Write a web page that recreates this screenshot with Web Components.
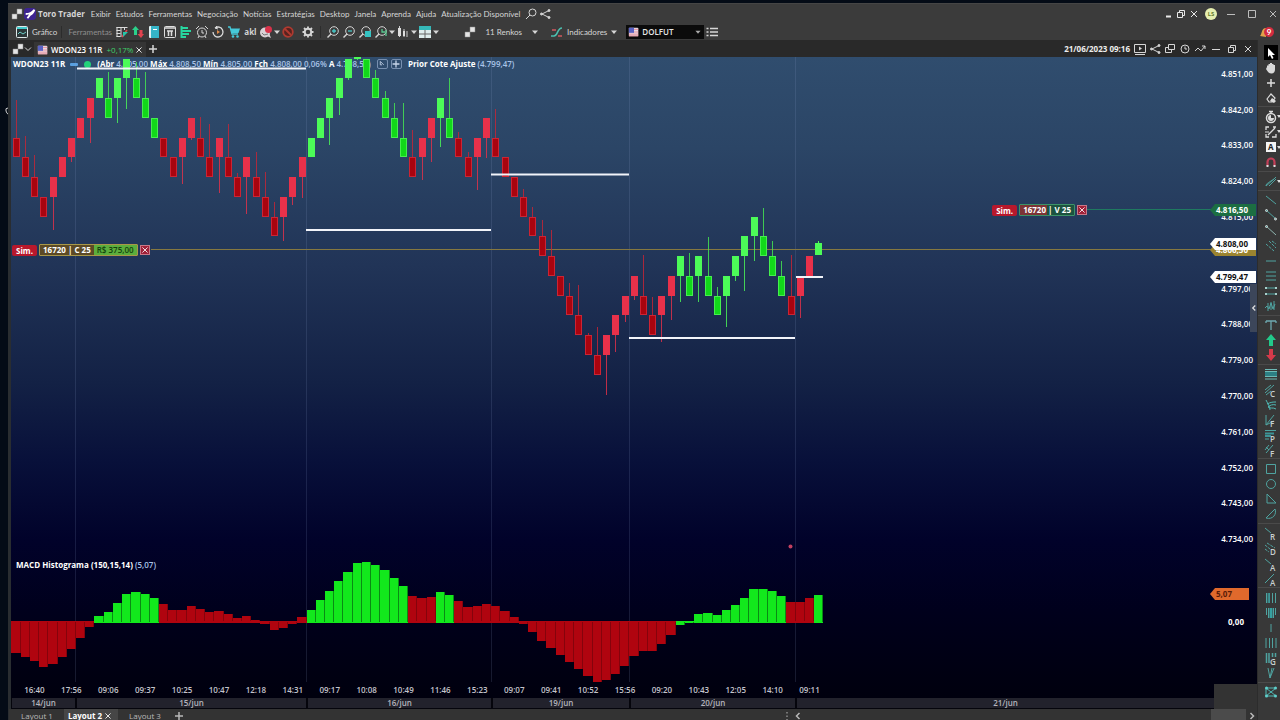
<!DOCTYPE html>
<html lang="pt-BR">
<head>
<meta charset="utf-8">
<title>Toro Trader</title>
<style>
html,body{margin:0;height:100%;background:#040b16;overflow:hidden}
body{font:8px/12px "Open Sans","Noto Sans",sans-serif;color:#d6d6d6}
</style>
</head>
<body>
<tt-app></tt-app>
<script>
const BASE = `*{box-sizing:border-box}
button,select{font:inherit;color:inherit;background:none;border:0;padding:0;margin:0;border-radius:0}
button{display:flex;align-items:center;justify-content:center;white-space:nowrap}
svg{display:block}`;

function define(name, css, html, setup) {
  const tpl = document.createElement('template');
  tpl.innerHTML = `<style>${BASE}${css}</style>${html}`;
  customElements.define(name, class extends HTMLElement {
    connectedCallback() {
      if (this.shadowRoot) return;
      this.attachShadow({mode: 'open'}).append(tpl.content.cloneNode(true));
      if (setup) setup(this, this.shadowRoot);
    }
  });
}

/* ---------- icons, drawn on a 14 x 14 grid ---------- */
const T = '#4fa3a0';
const letter = c => `<text x="6" y="14" font-size="8" font-weight="600" fill="#c8d0d0" stroke="none" font-family="Open Sans,sans-serif">${c}</text>`;
const flag = `<rect x="1" y="2" width="11" height="10" rx="1" fill="#e9d9e2" stroke="none"/><path d="M6 4h6M6 7h6M1 9.500h11M1 11.500h11" stroke="#e58a96"/><rect x="1" y="2" width="6" height="6" fill="#5a62c4" stroke="none"/>`;
const ICONS = {
  squares: `<path d="M2 7h5v5h-5zM7 2h5v5h-5z" fill="#e4e4e4" stroke="#8a8a8a" stroke-width=".5"/>`,
  logo: `<rect x="0" y="0" width="14" height="14" rx="4" fill="#3c2490" stroke="none"/><path d="M2 7c3 0 7-1 10-5-1 4-3 5-5 6l-3 4" stroke="#fff" stroke-width="2.200"/>`,
  search: `<circle cx="8.500" cy="5.500" r="3.500"/><path d="M6 8l-4 4"/>`,
  share: `<path d="M11 3.500L4 7l7 3.500"/><g fill="currentColor"><circle cx="11" cy="3.500" r="1"/><circle cx="3.500" cy="7" r="1"/><circle cx="11" cy="10.500" r="1"/></g>`,
  min: `<path d="M3 7.500h8"/>`,
  minb: `<path d="M5 9.500h5" stroke-width="2"/>`,
  max: `<path d="M3.500 3.500h7v7h-7z"/>`,
  restore: `<path d="M3.500 5.500h5v5h-5zM5.500 5.500v-2h5v5h-2"/>`,
  close: `<path d="M4 4l6 6M10 4l-6 6"/>`,
  plus: `<path d="M7 3v8M3 7h8" stroke-width="1.500"/>`,
  bell: `<path d="M0 11c2-1 1-8 6-8v9z" fill="#e0a24a" stroke="none"/>`,
  grafico: `<rect x="1.500" y="1.500" width="11" height="11" rx="1" fill="#2b3638" stroke="#dfe9e9"/><path d="M2 3h10" stroke="#4cc" stroke-width="2"/><path d="M3 9l2-2 3 2 3-2" stroke="#6fd0c8"/>`,
  table: `<path d="M1.500 2.500h11M1.500 5.500h4M1.500 8.500h4M1.500 11.500h4M2 2v10M6 2v10M9.500 2v3" stroke="#dcdcdc"/><path d="M12 5L7 12" stroke="#e0434f" stroke-width="1.500"/><path d="M8 7h5l-5 5z" fill="#27c4a8" stroke="none"/>`,
  updown: `<path d="M4.500 1L8 5H6v5H3V5H1z" fill="#2bd08a" stroke="none"/><path d="M10 13L6.500 9H8.500V5h3v4H13z" fill="#e0434f" stroke="none"/>`,
  book: `<rect x="2" y="1" width="10" height="12" rx="1" fill="#dfeff2" stroke="none"/><rect x="4" y="1" width="8" height="12" fill="#35b4c8" stroke="none"/><path d="M6 4.500h4" stroke="#fff"/>`,
  calendar: `<rect x="1.500" y="1.500" width="11" height="11" rx="1" stroke="#ddd"/><path d="M1.500 3h11M4 6h6M5.500 6v5M8.500 6v5" stroke="#ddd" stroke-width="1.500"/>`,
  depth: `<path d="M2.500 1v12" stroke="#27d7a0" stroke-width="2"/><path d="M3 3h6M3 6h9M3 9h7M3 12h4" stroke="#27d7a0" stroke-width="1.800"/>`,
  alarm: `<circle cx="7" cy="7.500" r="4.500"/><path d="M7 5v3h2M1 4l3-3M13 4l-3-3M3 13l1-2M11 13l-1-2" />`,
  replay: `<path d="M4 3a5 5 0 1 1-2 4" stroke="#ddd" stroke-width="1.300"/><path d="M4 3l2-2M4 3l3 1" /><path d="M6 5l3 2-3 2z" fill="#e08a4a" stroke="none"/>`,
  cart: `<path d="M1 2h2l2 7h6" stroke="#45c8d8" stroke-width="1.300"/><path d="M3.500 3.500H13L11.500 8H5z" fill="#45c8d8" stroke="none"/><circle cx="6" cy="11.500" r="1.300" fill="#45c8d8" stroke="none"/><circle cx="10.500" cy="11.500" r="1.300" fill="#45c8d8" stroke="none"/>`,
  chat: `<circle cx="6" cy="7.500" r="5" fill="#d8d0d4" stroke="none"/><path d="M8 11l4 2-2-5z" fill="#d8d0d4" stroke="none"/><circle cx="9.500" cy="4.500" r="3.500" fill="#d8324a" stroke="none"/><path d="M3 8l2 2 4-1" stroke="#777"/>`,
  block: `<circle cx="7" cy="7" r="4.800" fill="#57221f" stroke="#b03a30" stroke-width="1.800"/><path d="M4 4l6 6" stroke="#b03a30" stroke-width="1.800"/>`,
  gear: `<circle cx="7" cy="7" r="3.300" stroke-width="2"/><path d="M7 1.500v2M7 10.500v2M1.500 7h2M10.500 7h2M3 3l1.500 1.500M9.500 9.500L11 11M11 3L9.500 4.500M4.500 9.500L3 11" stroke-width="1.800"/>`,
  zoomin: `<circle cx="8" cy="6" r="4.300"/><path d="M5 9l-3.500 3.500" stroke-width="1.500"/><path d="M8 4v4M6 6h4" stroke="#48c8c8" stroke-width="1.300"/>`,
  zoomout: `<circle cx="8" cy="6" r="4.300"/><path d="M5 9l-3.500 3.500" stroke-width="1.500"/><path d="M6 6h4" stroke="#48c8c8" stroke-width="1.300"/>`,
  zoombox: `<circle cx="8" cy="6" r="4.300"/><path d="M5 9l-3.500 3.500" stroke-width="1.500"/><rect x="7" y="6" width="6" height="6" fill="#35c4c4" stroke="none"/>`,
  zoomtime: `<circle cx="8" cy="6" r="4.300"/><path d="M5 9l-3.500 3.500" stroke-width="1.500"/><path d="M8 4v3h3M12 5v6" stroke="#58c890" stroke-width="1.300"/>`,
  candles: `<path d="M3.500 1v11M8 4v8M11 6v6" stroke="#ccc"/><path d="M2 3h3v8H2z" fill="#ddd" stroke="none"/><path d="M7 6h2v5H7z" fill="#ddd" stroke="none"/>`,
  grid: `<rect x="1" y="1" width="12" height="12" fill="#dfeeee" stroke="none"/><rect x="1" y="1" width="12" height="4" fill="#35b8b8" stroke="none"/><path d="M7 5v8M1 9h12" stroke="#666"/>`,
  indic: `<path d="M1 11h3c4 0 3-8 8-8" stroke="#4cc0b0" stroke-width="1.500"/><path d="M2 5h4M8 11h4" stroke="#d05a60" stroke-width="1.300"/>`,
  list: `<path d="M5 3.500h8M5 7h8M5 10.500h8M1.500 3.500h2M1.500 7h2M1.500 10.500h2" stroke-width="1.500"/>`,
  flag,
  play: `<path d="M1.500 2.500h11v8h-11z"/><path d="M6 4.500l3 2-3 2z" fill="currentColor" stroke="none"/><path d="M2 12.500h10"/>`,
  windows: `<path d="M5.500 2.500h6v5h-6zM5.500 5.500h-3v5h6v-3"/>`,
  clock: `<circle cx="7" cy="7" r="4"/><path d="M7 4.500V7h2"/>`,
  trend: `<path d="M2 9l3-3 3 3 4-5M9 4h3v3"/>`,
  pointer: `<path d="M4 2v9l2-2 2 4 1.500-1-1.500-3h3z" fill="#fff" stroke="none"/>`,
  hand: `<path d="M3 6V4.500h1.500V3H6V2h2v1h1.500v1H11v4.500c0 2-1 4-3.500 4S4 11 2 8z" fill="#d8d8d8" stroke="none"/>`,
  erase: `<path d="M3 8l4-5 4 4-3 4H5z" stroke-width="1.200"/><path d="M8 7l4 3-2 2-4-2z" fill="#ddd" stroke="none"/>`,
  timer: `<circle cx="7" cy="8" r="4.500" stroke-width="1.500"/><path d="M5 1.500h4M7 2v2" stroke-width="1.500"/><path d="M7 5v3h3a3 3 0 1 1-3-3z" fill="#ddd" stroke="none"/>`,
  edit: `<path d="M2 5V2h3M9 2h3M2 9v3h3M12 9v3H8M4 10l7-7" stroke-width="1.300"/><path d="M1 7h4"/>`,
  letterA: `<rect x="2" y="2" width="10" height="10" fill="#f4f4f4" stroke="none"/><text x="4" y="10" font-size="8" font-weight="700" fill="#222" stroke="none" font-family="Open Sans,sans-serif">A</text>`,
  magnet: `<path d="M3.500 11V7a3.500 3.500 0 0 1 7 0v4" stroke="#c23f58" stroke-width="2.200"/><path d="M2.500 11h2M9.500 11h2" stroke="#ddd" stroke-width="2"/>`,
  brush: `<path d="M2 12l8-7 2-2M2 12c0-3 4-4 8-7M5 12l7-7" stroke="${T}"/>`,
  l1: `<path d="M2 3l10 8" stroke="${T}"/>`,
  l2: `<path d="M2 2l10 9" stroke="${T}"/><circle cx="2.500" cy="2.500" r="1" fill="${T}"/><circle cx="11.500" cy="11" r="1" fill="${T}"/>`,
  l3: `<path d="M2 2l10 9" stroke="#8fb5b0"/><circle cx="2.500" cy="2.500" r="1" fill="${T}"/>`,
  l4: `<path d="M2 5l8 7M5 2l7 7M8 2l4 3" stroke="${T}" stroke-dasharray="3 1"/>`,
  hline: `<path d="M2 7h10" stroke="${T}"/>`,
  hlines: `<path d="M2 3h10M2 7h10M2 11h10" stroke="${T}"/>`,
  channel: `<path d="M2 4h10M2 10h10" stroke="${T}"/><path d="M1 4h2M11 4h2M1 10h2M11 10h2" stroke="#a8d0cc" stroke-width="2"/>`,
  wave: `<path d="M1 9l2-2 2 3 2-6 2 6 2-5M4 4v8M7 3v8M10 2v9" stroke="${T}"/>`,
  text: `<path d="M2 3h10M7 3v9M2 3v2M12 3v2" stroke="#6da8b0" stroke-width="1.300"/>`,
  up: `<path d="M7 1l5 6H9v6H5V7H2z" fill="#22c98a" stroke="none"/>`,
  down: `<path d="M7 13l5-6H9V1H5v6H2z" fill="#d53a4a" stroke="none"/>`,
  fib: `<rect x="1" y="4" width="12" height="6" fill="#2c7f84" stroke="none"/><path d="M1 2.500h12M1 4.500h12M1 9.500h12M1 12h12" stroke="#6dbab6"/>`,
  fc: `<path d="M1 10L10 2M2 12l5-4M1 7l6-5" stroke="${T}"/>${letter('C')}`,
  fan: `<path d="M2 2c2 4 4 7 4 10M3 6c4-2 6-2 9-2M4 9c2-2 5-3 8-2M12 11c-3-2-6 0-8-2" stroke="#4fb8b4"/>`,
  ff: `<path d="M2 2v10L10 2M2 12l8-4" stroke="${T}"/>${letter('F')}`,
  fp: `<path d="M1 2.500h11M1 11h4" stroke="${T}"/><path d="M1 5.500h9M1 8h6" stroke="#3c9496" stroke-width="2"/>${letter('P')}`,
  fs: `<path d="M1 7l4-5M2 10l7-8M2 4l3 3" stroke="${T}"/>${letter('F')}`,
  square: `<path d="M2.500 2.500h9v9h-9z" stroke="${T}"/>`,
  circle: `<circle cx="7" cy="7" r="4.500" stroke="${T}"/>`,
  tri: `<path d="M3 2v9h9z" stroke="${T}"/>`,
  arc: `<path d="M2 11L11 2c2 5-2 11-9 9z" stroke="${T}"/>`,
  lr: `<path d="M1 2l6 5" stroke="${T}"/>${letter('R')}`,
  ld: `<path d="M1 4l5 4M3 2l8 5M1 8l4 3" stroke="${T}" stroke-dasharray="3 1"/>${letter('D')}`,
  la: `<path d="M1 2l6 5" stroke="${T}"/>${letter('A')}`,
  la2: `<path d="M1 11l9-9" stroke="${T}"/>${letter('A')}`,
  v1: `<path d="M2.500 2v10M5.500 2v10M8.500 2v10M11.500 2v10" stroke="${T}"/><path d="M4.500 2v10" stroke="#37898b" stroke-width="2"/>`,
  v2: `<path d="M2.500 2v7M11.500 2v7M4.500 2v10M9.500 2v10" stroke="${T}"/><path d="M7 2v10" stroke="#37a0a0" stroke-width="3"/>`,
  v3: `<path d="M7 3v8" stroke="${T}"/>`,
  v4: `<path d="M2 2v10M5.500 2v10M8.500 2v10M12 2v10" stroke="${T}"/>`,
  v5: `<path d="M2.500 2v10M5 2v10M8.500 2v4M11.500 2v4" stroke="${T}" stroke-width="1.500"/>${letter('G')}`,
  v6: `<path d="M4 2l2 10L10 2M8 2L6 12" stroke="${T}"/>`,
  net: `<path d="M2 3l10 8M12 3L2 11M2 3h10M2 11h10M2 3v8" stroke="#4fb8b4"/><g fill="#5fd0cc" stroke="none"><circle cx="2.500" cy="3" r="1.500"/><circle cx="11.500" cy="3" r="1.500"/><circle cx="2.500" cy="11" r="1.500"/><circle cx="11.500" cy="11" r="1.500"/></g>`,
  caret: `<path d="M4 5.500h6L7 9z" fill="currentColor" stroke="none"/>`,
  chevron: `<path d="M4 5.500l3 3 3-3"/>`,
  cursor: `<path d="M5 4l4 4M5 4v4h2" />`,
  left: `<path d="M8.500 4L5.500 7l3 3" stroke-width="1.500"/>`,
  right: `<path d="M5.500 4l3 3-3 3" stroke-width="1.500"/>`,
  more: `<path d="M7 3v1.500M7 6.500V8M7 10v1.500"/>`,
};
customElements.define('tt-icon', class extends HTMLElement {
  connectedCallback() {
    if (this.shadowRoot) return;
    this.attachShadow({mode: 'open'}).innerHTML = `<style>:host{display:block;flex:none;width:14px;height:14px}
      :host([size="small"]){width:12px;height:12px}
      svg{display:block;width:100%;height:100%;overflow:visible}</style>
      <svg viewBox="0 0 14 14" fill="none" stroke="currentColor" aria-hidden="true">${ICONS[this.getAttribute('name')] || ''}</svg>`;
  }
});
const btn = (icon, label, cls = '') => `<button class="${cls}" aria-label="${label}"><tt-icon name="${icon}"></tt-icon></button>`;

/* ---------- menu bar ---------- */
define('tt-menubar', `
:host{display:flex;align-items:center;height:20px;padding-left:2px;background:#3b3b3b;border-top:1px solid #454545;font-family:Lato,"Open Sans",sans-serif}
nav{display:flex;gap:5px;margin-left:6px}
strong{font:700 8px "Open Sans",sans-serif;margin-left:2px}
.tools{display:flex;margin-left:4px}
.win{display:flex;margin-left:auto;align-items:center;color:#e8e8e8}
.win button{width:13px}
.win .big{width:21px;color:#bdbdbd}
.win .big:last-child{width:15px;margin-left:3px}
.win .avatar{width:12px;height:12px;border-radius:50%;background:#e6efb0;color:#5f7a2a;font-size:6px;font-weight:700;margin:0 3px 0 5px}
`, `<tt-icon name="squares"></tt-icon><tt-icon name="logo" size="small"></tt-icon><strong>Toro Trader</strong>
<nav>${['Exibir','Estudos','Ferramentas','Negociação','Notícias','Estratégias','Desktop','Janela','Aprenda','Ajuda','Atualização Disponível'].map(t => `<button>${t}</button>`).join('')}</nav>
<div class="tools">${btn('search','Buscar')}${btn('share','Compartilhar')}</div>
<div class="win">${btn('minb','Minimizar gráfico')}${btn('restore','Restaurar gráfico')}${btn('close','Fechar gráfico')}<button class="avatar">LS</button>${btn('min','Minimizar','big')}${btn('max','Maximizar','big')}${btn('close','Fechar','big')}</div>`);

/* ---------- toolbar ---------- */
define('tt-toolbar', `
:host{display:flex;align-items:center;height:17px;padding-left:7px;background:#3b3b3b;font-family:Lato,"Open Sans",sans-serif}
button{height:16px;flex:none}
.i{width:16px}
.c{width:6px;overflow:hidden}
.c tt-icon{margin:0 -4px}
.label{gap:3px}
.muted{width:46px;margin-left:2px;color:#8e8e8e}
hr{width:1px;height:12px;border:0;margin:0 4px;background:#2c2c2c}
.akl{width:16px;font:700 8px "Open Sans",sans-serif}
.gear{margin:0 0 0 4px}
.renko{margin-left:24px;gap:8px}
.renko tt-icon:last-child{margin-left:-2px}
.ind{margin-left:8px}
.ind tt-icon:last-child{margin-left:-3px}
.combo{display:flex;align-items:center;position:relative;width:78px;height:14px;margin-left:5px;background:#0b0b0b}
.combo tt-icon{position:absolute;left:2px;pointer-events:none}
.combo tt-icon:last-child{left:auto;right:0;color:#aaa}
select{appearance:none;width:100%;height:100%;padding-left:16px;font:600 8px "Open Sans",sans-serif;color:#e6e6e6}
.bell{margin-left:auto;position:relative;width:20px;justify-content:flex-start}
.bell span{position:absolute;left:4px;top:3px;width:10px;height:10px;border-radius:50%;background:#d32c40;color:#fff;font-size:8px;line-height:10px;font-weight:700}
`, `<button class="label"><tt-icon name="grafico"></tt-icon>Gráfico</button><hr>
<span class="muted">Ferramentas</span>
${btn('table','Grade de cotações','i')}${btn('updown','Negociar','i')}${btn('book','Livro','i')}${btn('calendar','Times e trades','i')}${btn('depth','Profundidade','i')}${btn('alarm','Alarmes','i')}${btn('replay','Replay','i')}${btn('cart','Loja','i')}<button class="akl">akl</button>${btn('chat','Chat','i')}${btn('caret','Mais chat','c')}${btn('block','Bloquear','i')}${btn('gear','Configurações','i gear')}<hr>
${btn('zoomin','Aumentar','i')}${btn('zoomout','Diminuir','i')}${btn('zoombox','Zoom na área','i')}${btn('zoomtime','Zoom no tempo','i')}${btn('caret','Opções de zoom','c')}${btn('candles','Tipo de gráfico','i')}${btn('caret','Opções de tipo','c')}${btn('grid','Painéis','i')}${btn('caret','Opções de painéis','c')}
<button class="renko label"><tt-icon name="squares"></tt-icon>11 Renkos<tt-icon name="caret"></tt-icon></button>
<button class="ind label"><tt-icon name="indic"></tt-icon>Indicadores<tt-icon name="caret"></tt-icon></button>
<div class="combo"><tt-icon name="flag" size="small"></tt-icon><select aria-label="Ativo"><option>DOLFUT</option></select><tt-icon name="caret" size="small"></tt-icon></div>
${btn('list','Lista','i')}
<button class="bell" aria-label="Avisos"><tt-icon name="bell"></tt-icon><span>9</span></button>`);

/* ---------- chart tab strip ---------- */
define('tt-chart-tabs', `
:host{display:flex;flex:none;align-items:center;height:17px;padding-left:2px;background:#292929}
.sq{display:flex;width:23px}
.sq tt-icon:last-child{margin-left:-4px}
.tab{align-self:flex-end;height:15px;padding:0 1px 0 3px;gap:2px;background:#353535;color:#fff;font-size:8px;font-weight:600}
.tab em{font-style:normal;font-weight:400;color:#3fd06a;margin-left:2px}
.tab tt-icon:last-child{margin-left:-2px}
.right{display:flex;align-items:center;margin-left:auto;padding-right:1px}
time{font-size:8px;font-weight:700;color:#eee;margin-right:2px}
.right button{width:15px}
.right .w{width:16px}
`, `<button class="sq" aria-label="Periodicidade"><tt-icon name="squares"></tt-icon><tt-icon name="chevron"></tt-icon></button>
<button class="tab"><tt-icon name="flag" size="small"></tt-icon>WDON23 11R<em>+0,17%</em><tt-icon name="close" size="small"></tt-icon></button>${btn('plus','Nova aba')}
<div class="right"><time>21/06/2023 09:16</time>${btn('play','Reproduzir')}${btn('share','Compartilhar')}${btn('windows','Janelas')}${btn('clock','Histórico')}${btn('trend','Tendência','w')}${btn('min','Minimizar','w')}${btn('restore','Restaurar','w')}${btn('close','Fechar','w')}</div>`);

/* ---------- chart ---------- */
/* kind (R/G = colour, u/d = direction), top level, wick end */
const CANDLES = `Rd4:100 Rd5:136 Rd6:155 Rd7 Ru6:230 Ru5 Ru4:162 Ru3 Ru2:143 Gu1 Gd2:72 Gu1:123 Gu0:109 Gd1:62 Gd2:72 Gd3 Rd4 Rd5 Ru4:184 Ru3:140 Rd4:117 Rd5:124 Ru4:193 Rd5:124 Rd6:173 Ru5:214 Rd6:152 Rd7:172 Rd8:202 Ru7:241 Ru6:205 Ru5:198 Gu4 Gu3 Gu2:145 Gu1:115 Gu0:80 Gu-1:60 Gd0 Gd1:70 Gd2:91 Gd3:103 Gd4:103 Rd5:130 Ru4:180 Ru3:162 Gu2:147 Gd3:78 Rd4:132 Rd5:152 Ru4:190 Ru3:158 Rd4:109 Rd5 Rd6 Rd7:189 Rd8:207 Rd9:220 Rd10:230 Rd11 Rd12:283 Rd13:285 Rd14:333 Rd15:327 Ru14:395 Ru13:352 Ru12:322 Ru11:300 Rd12:255 Rd13:297 Ru12:342 Ru11:320 Gu10:302 Gd11:253 Gu10:302 Gd11:237 Gd12:287 Gu11:327 Gu10:281 Gu9:291 Gu8:261 Gd9:208 Gd10:241 Gd11:261 Rd12:255 Ru11:318 Ru10`.split(' ');
const MACD = [-31,-35,-39,-45,-42,-35,-27,-16,-5,6,10,19,28,30,28,24,18,12,12,16,13,10,11,8,4,6,2,-2,-8,-6,-2,5,12,22,31,41,50,59,60,57,52,44,36,26,24,25,30,27,21,15,16,18,16,11,5,-2,-10,-19,-26,-33,-40,-47,-54,-60,-58,-52,-44,-34,-29,-29,-22,-13,-3,-1,8,9,7,12,17,24,33,33,31,26,20,20,24,27];
const isGreenBar = i => (i > 8 && i < 16) || (i > 31 && i < 43) || i === 46 || i === 47 || (i > 71 && i < 84) || i === 87;
const STEP = 9.225, LEVEL = 19.75;
const COLORS = {Rd:['#a9040f','#cc2434'], Ru:['#e8314a','#e8314a'], Gd:['#12d81a','#46ee50'], Gu:['#4cfb58','#4cfb58']};
function drawChart() {
  let s = '';
  for (const x of [75, 306, 491, 629, 795]) s += `<path d="M${x}.5 57V682" stroke="#8ca0d0" stroke-opacity=".16"/>`;
  s += '<path d="M151 249.500H1212" stroke="#867840"/>';
  CANDLES.forEach((c, i) => {
    const [, kind, lv, wick] = c.match(/^(..)(-?\d+):?(\d*)$/);
    const x = Math.round(15.7 + i * STEP), y = Math.round(58.5 + lv * LEVEL), y2 = Math.round(58.5 + (+lv + 1) * LEVEL);
    const [fill, line] = COLORS[kind];
    if (wick) s += `<path d="M${x}.5 ${kind[1] === 'd' ? y : y2}V${wick}" stroke="${line}" stroke-opacity=".8"/>`;
    s += `<rect x="${x - 2.5}" y="${y + .5}" width="6" height="${y2 - y - 1}" fill="${fill}" stroke="${line}"/>`;
  });
  s += '<path d="M818.500 241v3" stroke="#4cfb58"/><rect x="815" y="243" width="7" height="12" fill="#4cfb58"/>';
  s += '<path d="M77 68.500H306M306 230H491M491 174.500H629M629 338H795M796 277H823" stroke="#f2f4fa" stroke-width="2"/>';
  s += '<circle cx="790.500" cy="546.500" r="2" fill="#c24060"/>';
  MACD.forEach((v, i) => {
    const x = Math.round(11.4 + i * STEP), w = Math.round(11.4 + (i + 1) * STEP) - x;
    const g = isGreenBar(i);
    s += `<rect x="${x}" y="${v > 0 ? 622 - v : 621}" width="${w}" height="${Math.abs(v) + 1}" fill="${g ? '#12e81c' : '#b0040f'}"/><path d="M${x + w - .5} ${v > 0 ? 622 - v : 622}v${Math.abs(v)}" stroke="${g ? '#0a8a14' : '#85030c'}"/>`;
    if (!g) s += `<path d="M${x} 621.500h${w}" stroke="#b0040f"/>`;
  });
  return s;
}
define('tt-price-tag', `
:host{position:absolute;right:1px;width:46px;height:12px;padding-left:6px;font-size:8px;line-height:12px;font-weight:700;background:var(--tag,#fff);color:var(--ink,#111);clip-path:polygon(0 50%,5px 0,100% 0,100% 100%,5px 100%)}
`, `<slot></slot>`);
define('tt-order', `
:host{position:absolute;display:flex;align-items:center;gap:2px;height:12px;color:#fff;font-size:8px;font-weight:700;line-height:10px}
.sim{padding:0 4px;height:11px;line-height:11px;border-radius:2px;background:#b8182c}
.box{display:flex;height:12px;border:1px solid var(--line);background:var(--fill);border-radius:1px}
::slotted(*){display:block;padding:0 3px}
::slotted(b){background:#5cae3c;color:#13420c;font-weight:600}
button{width:10px;height:10px;background:#a02038;border:1px solid #c87888;color:#fff}
`, `<span class="sim">Sim.</span><div class="box"><slot></slot></div><button aria-label="Cancelar ordem"><tt-icon name="close" size="small"></tt-icon></button>`);
const PRICES = ['4.851,00','4.842,00','4.833,00','4.824,00','4.815,00','','4.797,00','4.788,00','4.779,00','4.770,00','4.761,00','4.752,00','4.743,00','4.734,00'];
const TIMES = '16:40 17:56 09:06 09:37 10:25 10:47 12:18 14:31 09:17 10:08 10:49 11:46 15:23 09:07 09:41 10:52 15:56 09:20 10:43 12:05 14:10 09:11'.split(' ');
define('tt-chart', `
:host{display:flex;flex-direction:column;position:relative;overflow:hidden;background:linear-gradient(#304d6e 0,#2b4566 14%,#213457 32%,#132145 50%,#08103a 62%,#01022a 74%,#00001c 85%,#00000c 100%)}
header{display:flex;align-items:center;height:14px;flex:none;padding-left:2px;color:#fff;font-size:8px;font-weight:700;white-space:pre}
header i,h2 i{font-style:normal;font-weight:600;color:#a9c4e8}
.dash{width:8px;height:3px;margin:0 6px 0 5px;background:#5aa0e0;border-radius:1px}
.dot{width:7px;height:7px;margin-right:6px;border-radius:50%;background:#22d37a}
header button{width:11px;height:10px;border:1px solid #7890b0;border-radius:2px;color:#c8d6ea;margin-left:3px}
header .gap{margin-left:6px}
.plot{position:absolute;left:0;top:0;width:100%;height:100%;pointer-events:none}
h2{position:absolute;left:5px;top:502px;margin:0;font-size:8px;line-height:12px;font-weight:700;color:#fff;white-space:pre}
.prices{display:grid;grid-template-rows:repeat(14,1fr);flex:none;height:501px;margin:-15px 4px 0 auto;align-items:center;color:#fff;font-size:8px;font-weight:600;text-align:right}
.zero{position:absolute;right:13px;top:559px;color:#fff;font-weight:700}
.green-line{position:absolute;right:45px;top:152px;width:126px;height:1px;background:#1f7a60}
.axis{margin-top:auto;position:relative;padding-right:43px}
.axis::after{content:"";position:absolute;right:0;top:12px;bottom:0;width:43px;background:#333}
.times{display:grid;grid-template-columns:repeat(22,1fr);width:812px;height:26px;padding-top:12px;margin-left:5px;text-align:center;color:#c4c4cc;font-weight:600;line-height:12px}
.days{display:flex;gap:2px;height:11px;padding-left:1px;background:#05050c;border-bottom:1px solid #05050c}
.days span{background:#22222c;color:#b4b4bc;text-align:center;line-height:10px;font-weight:600}
.handle{position:absolute;right:0;top:227px;width:7px;height:48px;overflow:hidden;background:#3c465a;color:#ddd}
`, `<header>WDON23 11R<span class="dash"></span><span class="dot"></span>(Abr <i>4.805,00</i> Máx <i>4.808,50</i> Mín <i>4.805,00</i> Fch <i>4.808,00 0,06%</i> A <i>4.798,54)</i><button class="gap" aria-label="Ordem"><tt-icon name="cursor" size="small"></tt-icon></button><button aria-label="Adicionar"><tt-icon name="plus" size="small"></tt-icon></button><span class="gap">Prior Cote Ajuste <i>(4.799,47)</i></span></header>
<div class="prices">${PRICES.map(p => `<span>${p}</span>`).join('')}</div>
<svg class="plot"><g transform="translate(-11 -57)" fill="none"></g></svg>
<h2>MACD Histograma (150,15,14) <i>(5,07)</i></h2>
<span class="zero">0,00</span><div class="green-line"></div>
<tt-price-tag style="top:147px;--tag:#1c6e42;--ink:#fff">4.816,50</tt-price-tag>
<tt-price-tag style="top:187px;--tag:#9b8430;--ink:#fff">4.806,50</tt-price-tag>
<tt-price-tag style="top:181px">4.808,00</tt-price-tag>
<tt-price-tag style="top:214px">4.799,47</tt-price-tag>
<tt-price-tag style="top:531px;right:8px;width:39px;--tag:#e0692c;--ink:#5a1c08">5,07</tt-price-tag>
<tt-order style="left:1px;top:187px;--line:#a89848;--fill:#5c4a26"><span>16720 | C 25</span><b>R$ 375,00</b></tt-order>
<tt-order style="right:170px;top:147px;--line:#3c9468;--fill:linear-gradient(90deg,#7c3436 27px,#1c5340 27px)"><span>16720 | V 25</span></tt-order>
<button class="handle" aria-label="Recolher"><tt-icon name="left" size="small"></tt-icon></button>
<div class="axis"><div class="times">${TIMES.map(t => `<span>${t}</span>`).join('')}</div>
<div class="days"><span style="width:63px">14/jun</span><span style="width:229px">15/jun</span><span style="width:183px">16/jun</span><span style="width:136px">19/jun</span><span style="width:164px">20/jun</span><span style="flex:1">21/jun</span></div></div>`,
(host, root) => { root.querySelector('.plot g').innerHTML = drawChart(); });

/* ---------- drawing tools ---------- */
const GROUPS = ['pointer hand plus erase','timer edit letterA magnet','brush','l1 l2 l3 l4 hline hlines channel wave','text up down','fib fc fan ff fp fs','square circle tri arc','lr ld la la2','v1 v2 v3 v4 v5 v6','net'];
define('tt-toolbox', `
:host{display:flex;flex-direction:column;width:23px;padding:5px 0 20px;background:#383838;border-left:1px solid #2c2c2c}
button{flex:1 1 0;min-height:0;width:100%;padding-left:4px;position:relative;color:#dcdcdc}
button:first-of-type{background:linear-gradient(#000,#000) 6px 0/14px 100% no-repeat}
.more::after{content:"";position:absolute;right:-1px;top:6px;border:2px solid transparent;border-top:3px solid #ddd}
hr{flex:none;width:100%;height:1px;border:0;margin:1px 0 2px;background:#4a4a4a}
`, GROUPS.map(g => g.split(' ').map(n => btn(n, n, /timer|edit|letterA|brush/.test(n) ? 'more' : '')).join('')).join('<hr>'));

/* ---------- layout tabs ---------- */
define('tt-layouts', `
:host{display:flex;flex:none;height:11px;padding-left:1px;background:#333;overflow:hidden;color:#b8b8b8}
button{height:13px}
.t{width:54px}
.on{background:#464646;color:#fff;font-weight:700}
.scroll{display:flex;flex:0 0 476px;margin-left:auto}
.thumb{width:35px;background:#4b4b4b;margin-left:auto}
.scroll button{width:11px}
`, `<button class="t">Layout 1</button><button class="t on">Layout 2<tt-icon name="close" size="small"></tt-icon></button><button class="t">Layout 3</button>${btn('plus','Novo layout')}
<div class="scroll">${btn('more','Mais')}${btn('left','Anterior')}<div class="thumb"></div>${btn('right','Próximo')}</div>`);

/* ---------- application frame ---------- */
define('tt-app', `
:host{display:grid;grid-template:3px auto auto minmax(0,1fr)/8px minmax(0,1fr);height:100vh}
.edge{grid-row:4;grid-column:1;padding-top:67px}
.edge svg{margin-left:auto}
tt-menubar{grid-column:2;grid-row:2}
tt-toolbar{grid-column:2;grid-row:3}
main{grid-column:2;grid-row:4;display:grid;grid-template:minmax(0,1fr)/minmax(0,1fr) auto}
.work{display:flex;flex-direction:column;min-height:0;border-left:1px solid #2a2d30;background:#292d31}
tt-chart{flex:1;min-height:0;margin-left:2px}
`, `<div class="edge"><svg width="3" height="8" viewBox="0 0 3 8" fill="none" stroke="#ccc"><path d="M3 1Q0 1 1 4T3 7"/></svg></div>
<tt-menubar></tt-menubar><tt-toolbar></tt-toolbar>
<main><div class="work"><tt-chart-tabs></tt-chart-tabs><tt-chart></tt-chart><tt-layouts></tt-layouts></div><tt-toolbox></tt-toolbox></main>`);
</script>
</body>
</html>
